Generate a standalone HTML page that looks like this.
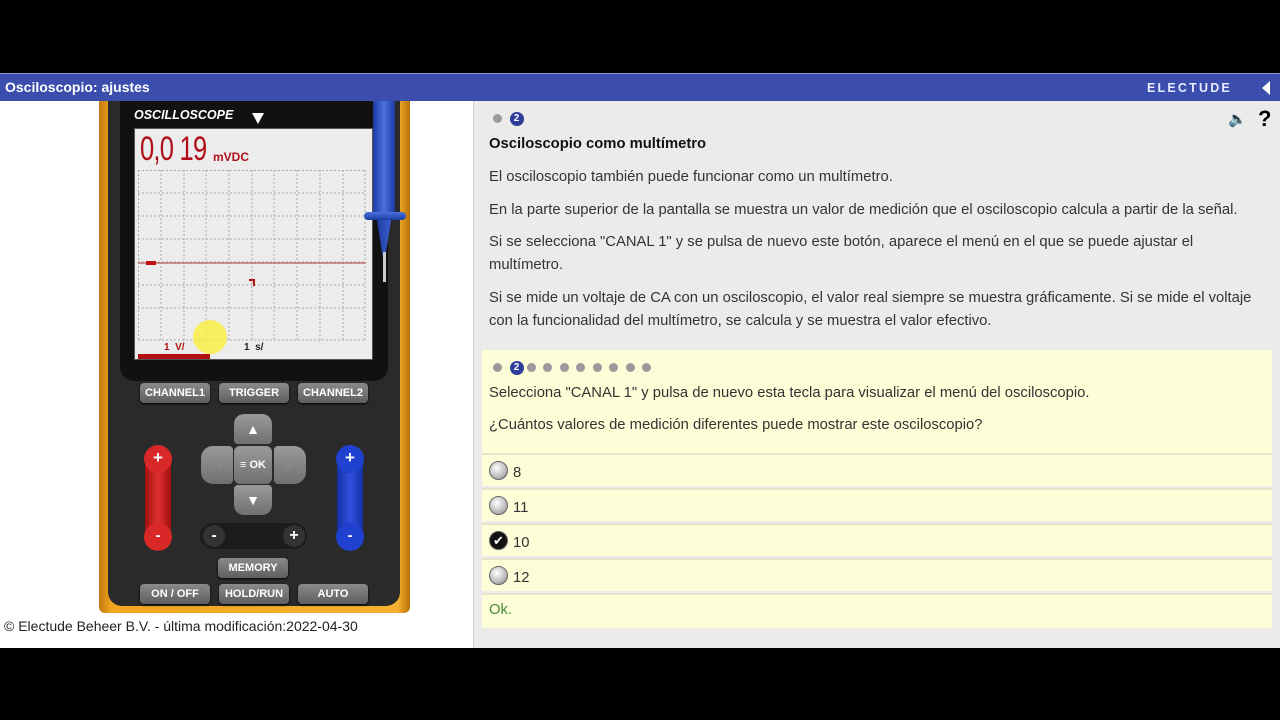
<!DOCTYPE html>
<html><head><meta charset="utf-8"><style>
*{margin:0;padding:0;box-sizing:border-box}
body{width:1280px;height:720px;background:#000;position:relative;overflow:hidden;font-family:"Liberation Sans",sans-serif}
.a{position:absolute}
.hdr{left:0;top:73px;width:1280px;height:28px;background:#3b4eae;border-top:1px solid #8a97d6}
.left{left:0;top:101px;width:473px;height:547px;background:#fff}
.right{left:473px;top:101px;width:807px;height:547px;background:#ebebea;border-left:1px solid #d0d0d0}
.t{color:#333;font-size:14.8px;line-height:23px}
.btn{position:absolute;background:linear-gradient(#8a8a8a,#5e5e5e);color:#fff;font-weight:bold;font-size:11px;text-align:center;border-radius:4px;line-height:20px;box-shadow:0 1px 2px #000}
.gb{position:absolute;background:linear-gradient(#9a9a9a,#707070);border-radius:6px;color:#fff;text-align:center;font-weight:bold}
.row{position:absolute;left:482px;width:790px;height:33px;background:#fdfdd8;border-top:2px solid #e4e4cc;font-size:14.8px;color:#333}
.rad{position:absolute;left:7px;top:6px;width:19px;height:19px;border-radius:50%;background:radial-gradient(circle at 40% 35%,#fff,#bbb 60%,#777);border:1px solid #666}
.dot{display:inline-block;width:9px;height:9px;border-radius:50%;background:#9a9a9a;margin-right:7.5px;vertical-align:middle}
.n2{display:inline-block;width:14px;height:14px;border-radius:50%;background:#2e3d9a;color:#fff;font-size:10px;font-weight:bold;text-align:center;line-height:14px;margin-right:3px;vertical-align:middle}
</style></head><body>
<div class="a hdr"><div class="a" style="left:5px;top:5px;color:#fff;font-weight:bold;font-size:14px">Osciloscopio: ajustes</div>
<div class="a" style="left:1147px;top:7px;color:#e8ecff;font-weight:bold;font-size:12.5px;letter-spacing:2.2px">ELECTUDE</div>
<div class="a" style="left:1262px;top:7px;width:0;height:0;border-top:7px solid transparent;border-bottom:7px solid transparent;border-right:8px solid #fff"></div></div>
<div class="a left"></div>
<div class="a" style="left:99px;top:101px;width:311px;height:512px;background:linear-gradient(90deg,#c07a10,#f2a51e 4%,#f6b030 96%,#b87208);border-radius:0 0 6px 6px"></div>
<div class="a" style="left:108px;top:101px;width:292px;height:505px;background:#2a2a2a;border-radius:0 0 14px 14px"></div>
<div class="a" style="left:120px;top:101px;width:268px;height:280px;background:#111;border-radius:0 0 14px 14px"></div>
<div class="a" style="left:134px;top:108px;color:#fff;font-weight:bold;font-style:italic;font-size:12.5px">OSCILLOSCOPE</div>
<div class="a" style="left:252px;top:113px;border-left:6px solid transparent;border-right:6px solid transparent;border-top:11px solid #fff"></div>
<div class="a" style="left:134px;top:128px;width:239px;height:232px;background:#ececec;border:1px solid #555"></div>
<div class="a" style="left:140px;top:130px;color:#b0101a;font-size:34px;letter-spacing:-1px;transform:scaleX(0.75);transform-origin:left;font-family:'Liberation Sans Narrow','Liberation Sans',sans-serif">0,0 19</div>
<div class="a" style="left:213px;top:150px;color:#b0101a;font-size:12px;font-weight:bold">mVDC</div>
<svg class="a" style="left:138px;top:170px" width="228" height="172">
<g stroke="#aaa" stroke-dasharray="2,2" stroke-width="1">
<line x1="0" y1="0.5" x2="228" y2="0.5"/><line x1="0" y1="23" x2="228" y2="23"/><line x1="0" y1="46" x2="228" y2="46"/><line x1="0" y1="69" x2="228" y2="69"/><line x1="0" y1="92" x2="228" y2="92"/><line x1="0" y1="115" x2="228" y2="115"/><line x1="0" y1="138" x2="228" y2="138"/><line x1="0" y1="170" x2="228" y2="170"/>
<line x1="0.5" y1="0" x2="0.5" y2="172"/><line x1="23" y1="0" x2="23" y2="172"/><line x1="46" y1="0" x2="46" y2="172"/><line x1="68" y1="0" x2="68" y2="172"/><line x1="91" y1="0" x2="91" y2="172"/><line x1="114" y1="0" x2="114" y2="172"/><line x1="136" y1="0" x2="136" y2="172"/><line x1="159" y1="0" x2="159" y2="172"/><line x1="182" y1="0" x2="182" y2="172"/><line x1="205" y1="0" x2="205" y2="172"/><line x1="227" y1="0" x2="227" y2="172"/></g>
<line x1="0" y1="93" x2="228" y2="93" stroke="#c07070" stroke-width="1.5"/>
<rect x="8" y="91" width="10" height="4" fill="#c01010"/>
<path d="M111 110h5v6" stroke="#b01010" stroke-width="2" fill="none"/>
</svg>
<div class="a" style="left:164px;top:342px;color:#b01010;font-size:10px;font-weight:bold">1 &nbsp;V/</div>
<div class="a" style="left:244px;top:342px;color:#222;font-size:10px;font-weight:bold">1 &nbsp;s/</div>
<div class="a" style="left:138px;top:354px;width:72px;height:5px;background:#b01010"></div>
<div class="a" style="left:193px;top:320px;width:34px;height:34px;border-radius:50%;background:rgba(250,240,60,0.8)"></div>
<div class="a" style="left:373px;top:101px;width:22px;height:115px;background:linear-gradient(90deg,#1c3aa0,#4a72e0,#1c3aa0);border-radius:0 0 4px 4px"></div>
<div class="a" style="left:364px;top:212px;width:42px;height:8px;background:linear-gradient(#4a72e0,#1c3aa0);border-radius:4px"></div>
<div class="a" style="left:377px;top:220px;width:14px;height:36px;background:linear-gradient(90deg,#1c3aa0,#3a60d0);clip-path:polygon(0 0,100% 0,60% 100%,40% 100%)"></div>
<div class="a" style="left:383px;top:252px;width:3px;height:30px;background:#ccc"></div>
<div class="btn" style="left:140px;top:383px;width:70px">CHANNEL1</div>
<div class="btn" style="left:219px;top:383px;width:70px">TRIGGER</div>
<div class="btn" style="left:298px;top:383px;width:70px">CHANNEL2</div>
<div class="a" style="left:145px;top:446px;width:26px;height:100px;background:linear-gradient(90deg,#a01010,#e03030,#a01010);border-radius:13px"></div>
<div class="a" style="left:144px;top:445px;width:28px;height:28px;border-radius:50%;background:#d82828;color:#fff;font-weight:bold;text-align:center;line-height:26px;font-size:17px">+</div>
<div class="a" style="left:144px;top:523px;width:28px;height:28px;border-radius:50%;background:#d82828;color:#fff;font-weight:bold;text-align:center;line-height:26px;font-size:15px">-</div>
<div class="a" style="left:337px;top:446px;width:26px;height:100px;background:linear-gradient(90deg,#1430a0,#3050e0,#1430a0);border-radius:13px"></div>
<div class="a" style="left:336px;top:445px;width:28px;height:28px;border-radius:50%;background:#2040d0;color:#fff;font-weight:bold;text-align:center;line-height:26px;font-size:17px">+</div>
<div class="a" style="left:336px;top:523px;width:28px;height:28px;border-radius:50%;background:#2040d0;color:#fff;font-weight:bold;text-align:center;line-height:26px;font-size:15px">-</div>
<div class="gb" style="left:234px;top:414px;width:38px;height:30px;line-height:30px;font-size:14px;border-radius:10px 10px 4px 4px">▲</div>
<div class="gb" style="left:234px;top:485px;width:38px;height:30px;line-height:30px;font-size:14px;border-radius:4px 4px 10px 10px">▼</div>
<div class="gb" style="left:201px;top:446px;width:32px;height:38px;border-radius:12px 4px 4px 12px;color:#888;line-height:38px;font-size:11px">◀</div>
<div class="gb" style="left:274px;top:446px;width:32px;height:38px;border-radius:4px 12px 12px 4px;color:#888;line-height:38px;font-size:11px">▶</div>
<div class="gb" style="left:234px;top:446px;width:38px;height:38px;line-height:38px;font-size:11px">≡ OK</div>
<div class="a" style="left:200px;top:523px;width:107px;height:26px;background:#1c1c1c;border-radius:13px"></div>
<div class="a" style="left:203px;top:525px;width:22px;height:22px;border-radius:50%;background:#333;color:#fff;font-weight:bold;text-align:center;line-height:21px">-</div>
<div class="a" style="left:283px;top:525px;width:22px;height:22px;border-radius:50%;background:#333;color:#fff;font-weight:bold;text-align:center;line-height:21px;font-size:16px">+</div>
<div class="btn" style="left:218px;top:558px;width:70px">MEMORY</div>
<div class="btn" style="left:140px;top:584px;width:70px">ON / OFF</div>
<div class="btn" style="left:219px;top:584px;width:70px">HOLD/RUN</div>
<div class="btn" style="left:298px;top:584px;width:70px">AUTO</div>
<div class="a" style="left:4px;top:618px;font-size:14px;color:#222">© Electude Beheer B.V. - última modificación:2022-04-30</div>
<div class="a right"></div>
<div class="a" style="left:493px;top:110px"><span class="dot"></span><span class="n2">2</span></div>
<div class="a" style="left:1228px;top:110px;font-size:15px">🔈</div>
<div class="a" style="left:1258px;top:106px;font-size:22px;font-weight:bold">?</div>
<div class="a" style="left:489px;top:136px;font-weight:bold;font-size:14.8px;color:#111">Osciloscopio como multímetro</div>
<div class="a t" style="left:489px;top:166px">El osciloscopio también puede funcionar como un multímetro.</div>
<div class="a t" style="left:489px;top:199px">En la parte superior de la pantalla se muestra un valor de medición que el osciloscopio calcula a partir de la señal.</div>
<div class="a t" style="left:489px;top:231px;width:720px">Si se selecciona "CANAL 1" y se pulsa de nuevo este botón, aparece el menú en el que se puede ajustar el multímetro.</div>
<div class="a t" style="left:489px;top:287px;width:775px">Si se mide un voltaje de CA con un osciloscopio, el valor real siempre se muestra gráficamente. Si se mide el voltaje con la funcionalidad del multímetro, se calcula y se muestra el valor efectivo.</div>
<div class="a" style="left:482px;top:350px;width:790px;height:103px;background:#fdfdd8"></div>
<div class="a" style="left:493px;top:359px"><span class="dot"></span><span class="n2">2</span><span class="dot"></span><span class="dot"></span><span class="dot"></span><span class="dot"></span><span class="dot"></span><span class="dot"></span><span class="dot"></span><span class="dot"></span></div>
<div class="a t" style="left:489px;top:382px">Selecciona "CANAL 1" y pulsa de nuevo esta tecla para visualizar el menú del osciloscopio.</div>
<div class="a t" style="left:489px;top:414px">¿Cuántos valores de medición diferentes puede mostrar este osciloscopio?</div>
<div class="row" style="top:453px"><div class="rad"></div><span class="a" style="left:31px;top:10px">8</span></div>
<div class="row" style="top:488px"><div class="rad"></div><span class="a" style="left:31px;top:10px">11</span></div>
<div class="row" style="top:523px"><div class="rad" style="background:#111;color:#fff;text-align:center;font-size:13px;line-height:17px">✔</div><span class="a" style="left:31px;top:10px">10</span></div>
<div class="row" style="top:558px"><div class="rad"></div><span class="a" style="left:31px;top:10px">12</span></div>
<div class="row" style="top:593px;height:35px"><span class="a" style="left:7px;top:7px;color:#4a8a3a">Ok.</span></div>
</body></html>
